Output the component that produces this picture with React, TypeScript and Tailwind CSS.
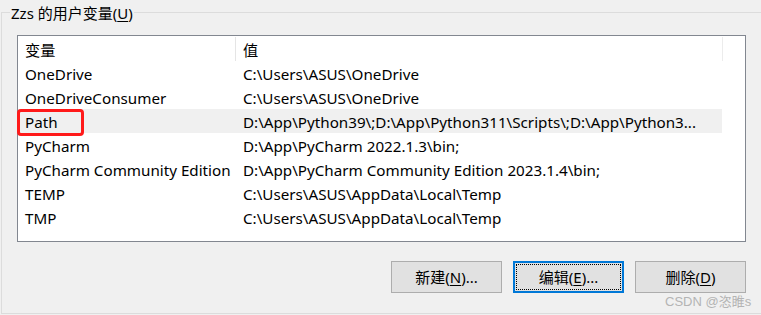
import React from 'react';

const rows = [
  { name: 'OneDrive', value: 'C:\\Users\\ASUS\\OneDrive' },
  { name: 'OneDriveConsumer', value: 'C:\\Users\\ASUS\\OneDrive' },
  { name: 'Path', value: 'D:\\App\\Python39\\;D:\\App\\Python311\\Scripts\\;D:\\App\\Python3...', selected: true },
  { name: 'PyCharm', value: 'D:\\App\\PyCharm 2022.1.3\\bin;' },
  { name: 'PyCharm Community Edition', value: 'D:\\App\\PyCharm Community Edition 2023.1.4\\bin;' },
  { name: 'TEMP', value: 'C:\\Users\\ASUS\\AppData\\Local\\Temp' },
  { name: 'TMP', value: 'C:\\Users\\ASUS\\AppData\\Local\\Temp' },
];

function WinButton({ label, hotkey, rest, focused }: { label: string; hotkey: string; rest: string; focused?: boolean }) {
  return (
    <button
      className={
        focused
          ? 'w-[111px] h-[32px] bg-[#e1e1e1] border-2 border-[#0078d7] p-[1px] flex'
          : 'w-[111px] h-[32px] bg-[#e1e1e1] border border-[#adadad] flex items-center justify-center'
      }
    >
      {focused ? (
        <span className="flex-1 h-full border border-dotted border-black flex items-center justify-center">
          {label}(<span className="underline underline-offset-2">{hotkey}</span>){rest}
        </span>
      ) : (
        <span>
          {label}(<span className="underline underline-offset-2">{hotkey}</span>){rest}
        </span>
      )}
    </button>
  );
}

export default function App() {
  return (
    <div
      className="relative w-[761px] h-[315px] bg-[#f0f0f0] overflow-hidden text-[15.2px] text-black"
      style={{ fontFamily: '"Noto Sans", "Noto Sans CJK SC", sans-serif' }}
    >
      <div className="pt-[12px] pl-[1px]">
        <div className="relative h-[302px] border-l border-t border-b border-[#dcdcdc]">
          <span className="absolute left-[8px] top-[-12px] px-[1px] bg-[#f0f0f0] leading-[24px] text-[15px]">
            Zzs 的用户变量(<span className="underline underline-offset-2">U</span>)
          </span>

          <div className="ml-[15px] mt-[22px] w-[729px] h-[207px] border border-[#828790] bg-white">
            <div className="flex h-[25px] items-center">
              <div className="w-[217px] h-full pl-[7px] flex items-center pt-[4px]">变量</div>
              <div className="w-px h-[24px] self-start mt-[1px] bg-[#e5e5e5]" />
              <div className="w-[486px] h-full pl-[7px] flex items-center pt-[4px]">值</div>
              <div className="w-px h-[24px] self-start mt-[1px] bg-[#ececec]" />
            </div>
            <div className="flex flex-col w-[704px]">
              {rows.map((r) => (
                <div
                  key={r.name}
                  className={'flex h-[24px] items-center pt-[2px] whitespace-nowrap ' + (r.selected ? 'bg-[#f0f0f0]' : '')}
                >
                  <div className="w-[218px] pl-[7px]">{r.name}</div>
                  <div className="w-[486px] pl-[7px] overflow-hidden">{r.value}</div>
                </div>
              ))}
            </div>
          </div>

          <div className="flex justify-end gap-[11px] mt-[19px] w-[744px] text-[15px]">
            <WinButton label="新建" hotkey="N" rest="..." />
            <WinButton label="编辑" hotkey="E" rest="..." focused />
            <WinButton label="删除" hotkey="D" rest="" />
          </div>
        </div>
      </div>

      <div className="absolute left-[17px] top-[109px] w-[67px] h-[27px] border-[3px] border-[#ff1a1a] rounded-[4px]" />

      <div
        className="absolute left-[665px] top-[292px] text-[13px] text-[#b4b4b4]"
        style={{ fontFamily: '"Liberation Sans", "Noto Sans CJK SC", sans-serif' }}
      >
        CSDN @恣睢s
      </div>
    </div>
  );
}
